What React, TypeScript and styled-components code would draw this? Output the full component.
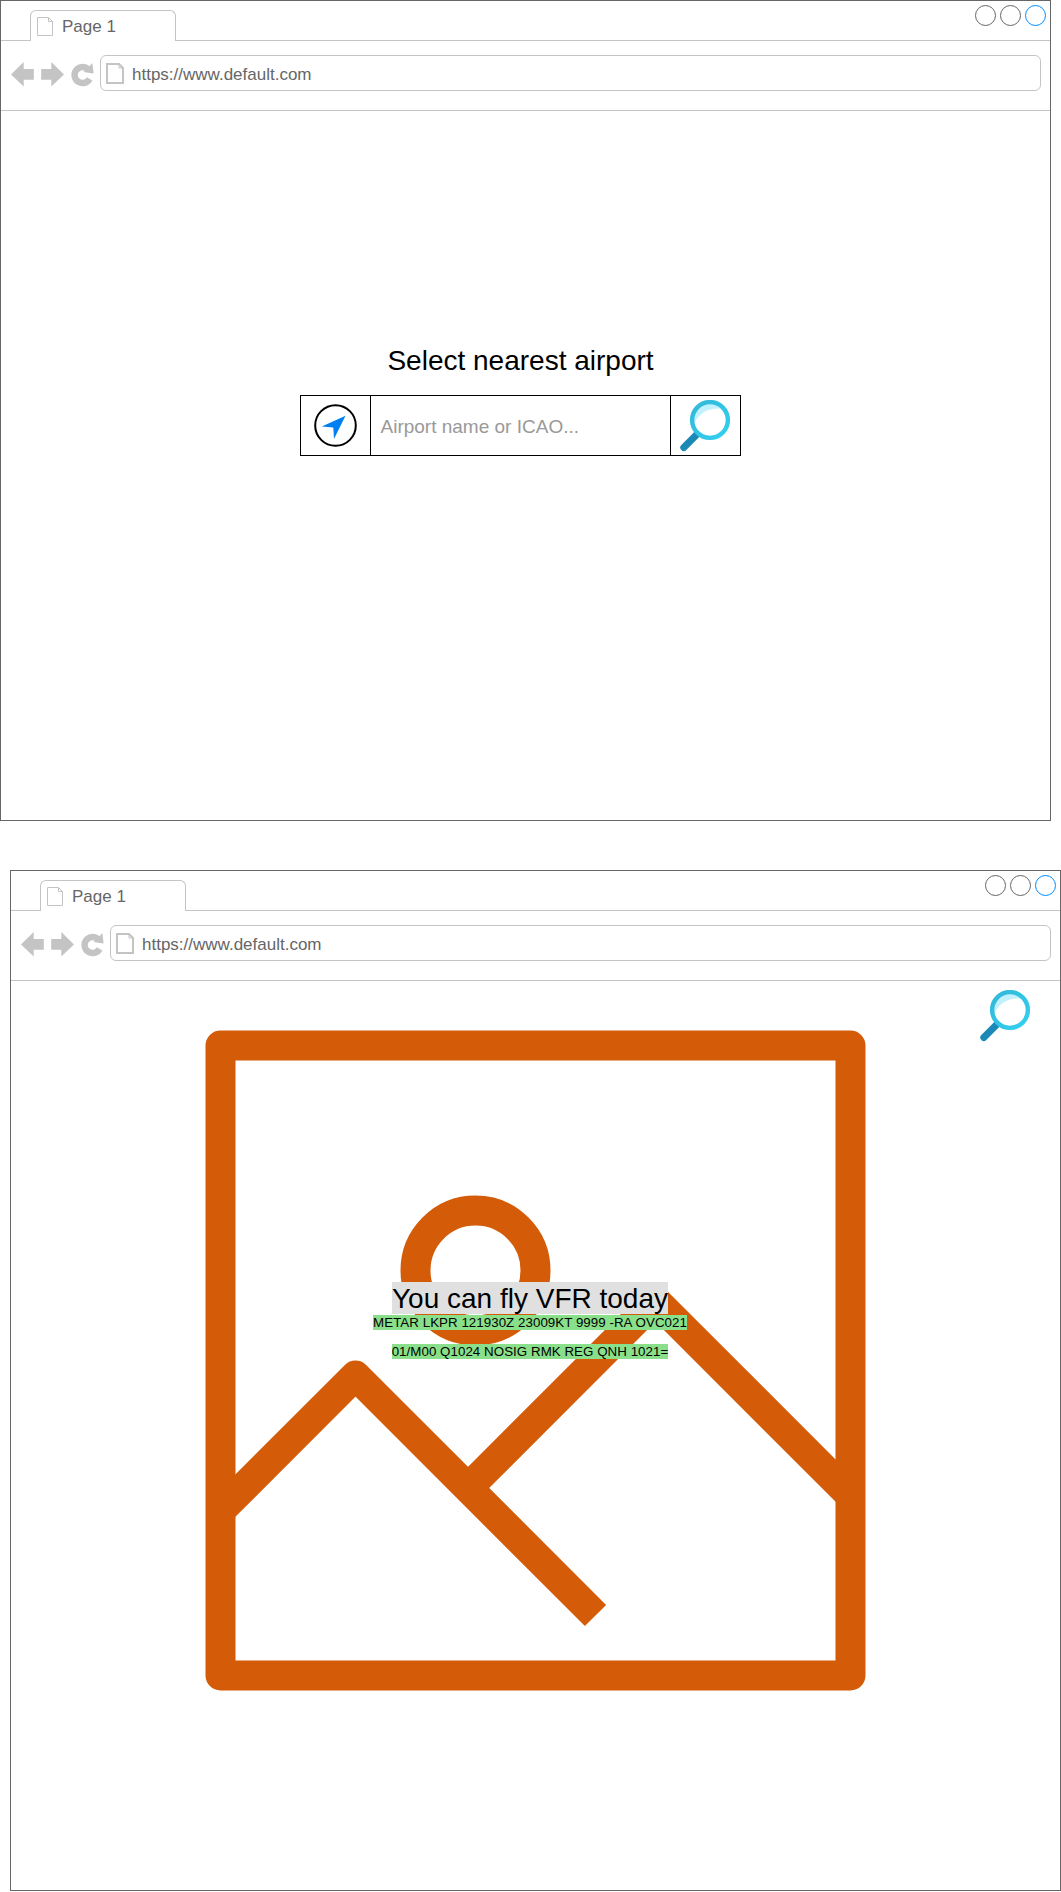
import React from "react";
import styled, { createGlobalStyle } from "styled-components";

const GlobalStyle = createGlobalStyle`
  * { box-sizing: border-box; }
  body {
    margin: 0;
    background: #fff;
    font-family: "Liberation Sans", Arial, Helvetica, sans-serif;
  }
  svg { display: block; flex: none; }
`;

const Board = styled.main`
  display: flex;
  flex-direction: column;
  gap: 49px;
  width: 1061px;
  height: 1892px;
`;

const Window = styled.section<{ $height: number; $inset?: number }>`
  display: flex;
  flex: none;
  flex-direction: column;
  width: 1051px;
  height: ${(p) => p.$height}px;
  margin-left: ${(p) => p.$inset ?? 0}px;
  border: 1px solid #666;
  background: #fff;
`;

const TabStrip = styled.header`
  display: flex;
  align-items: stretch;
  height: 40px;
`;

const StripLine = styled.div<{ $width?: number }>`
  flex: ${(p) => (p.$width ? `0 0 ${p.$width}px` : "1")};
  border-bottom: 1px solid #c4c4c4;
`;

const Tab = styled.div`
  display: flex;
  align-items: center;
  gap: 9px;
  width: 146px;
  margin-top: 9px;
  padding: 1px 0 0 6px;
  border: 1px solid #c4c4c4;
  border-bottom: 0;
  border-radius: 6px 6px 0 0;
  color: #666;
  font-size: 17px;
  line-height: 20px;
`;

const Controls = styled(StripLine)`
  display: flex;
  justify-content: flex-end;
  gap: 4px;
  padding: 4px 4px 0 0;
`;

const Control = styled.span<{ $color: string }>`
  width: 21px;
  height: 21px;
  border: 1px solid ${(p) => p.$color};
  border-radius: 50%;
`;

const Toolbar = styled.nav`
  display: flex;
  align-items: flex-start;
  height: 70px;
  padding: 14px 9px 0 9px;
  border-bottom: 1px solid #c4c4c4;
`;

const Address = styled.div`
  display: flex;
  flex: 1;
  align-items: center;
  gap: 8px;
  height: 36px;
  padding-left: 5px;
  border: 1px solid #c4c4c4;
  border-radius: 6px;
  color: #666;
  font-size: 17px;
  line-height: 20px;
`;

const Url = styled.span`
  padding-top: 3px;
`;

const SearchPage = styled.div`
  display: flex;
  flex-direction: column;
  align-items: center;
  padding: 234px 10px 0 0;
`;

const Heading = styled.h1`
  margin: 0 0 18px;
  font-size: 28px;
  font-weight: 400;
  line-height: 32px;
`;

const SearchRow = styled.div`
  display: flex;
  width: 441px;
  height: 61px;
  margin-right: 1px;
  border: 1px solid #000;
`;

const SearchCell = styled.button<{ $side: "left" | "right" }>`
  display: flex;
  align-items: center;
  justify-content: center;
  width: 70px;
  padding: 0;
  border: 0 solid #000;
  border-${(p) => (p.$side === "left" ? "right" : "left")}-width: 1px;
  background: none;
`;

const Field = styled.div`
  flex: 1;
  padding: 20px 0 0 10px;
  color: #999;
  font-size: 19px;
  line-height: 21px;
`;

const ResultPage = styled.div`
  display: grid;
  grid-template-columns: 1fr 661px 1fr;
`;

const Picture = styled.div`
  display: grid;
  grid-column: 2;
  margin-top: 49px;
  > * { grid-area: 1 / 1; }
`;

const Caption = styled.div`
  display: flex;
  flex-direction: column;
  align-items: center;
  padding: 252px 11px 0 0;
  text-align: center;
`;

const Verdict = styled.div`
  height: 32px;
  background: #e0e0e0;
  font-size: 28px;
  line-height: 34px;
  white-space: nowrap;
`;

const Metar = styled.div`
  display: flex;
  flex-direction: column;
  align-items: center;
  gap: 14px;
  margin-top: 1px;
  font-size: 13.33px;
  letter-spacing: 0.04px;
  line-height: 15px;
  white-space: nowrap;
`;

const Marked = styled.span`
  background: #8ae08a;
`;

const SearchAgain = styled.div`
  justify-self: end;
  padding: 9px 29px 0 0;
`;

function PageIcon({ width, height, stroke }: { width: number; height: number; stroke: number }) {
  const h = stroke / 2;
  const r = width - h;
  return (
    <svg width={width} height={height} fill="none" stroke="#c4c4c4" strokeWidth={stroke}>
      <path d={`M${h} ${h}H${r - 4}L${r} ${h + 4}V${height - h}H${h}Z`} />
      <path d={`M${r - 4} ${h}V${h + 4}H${r}`} strokeWidth="1" />
    </svg>
  );
}

function NavIcons() {
  return (
    <svg width="90" height="36" fill="#c4c4c4">
      <path d="M1 19.5L13.7 7V14H23.8V24.8H13.7V31.5Z" />
      <path d="M54 19.5L41.3 7V14H31.2V24.8H41.3V31.5Z" />
      <path d="M79.6 23.9A8 8 0 1 1 77.6 13.8" fill="none" stroke="#c4c4c4" strokeWidth="6.4" />
      <path d="M82.4 8L83.6 18.4L73.6 17Z" />
    </svg>
  );
}

function Magnifier() {
  return (
    <svg width="51" height="52" viewBox="0 0 51 52">
      <defs>
        <linearGradient id="ring" x1="0" y1="0" x2="1" y2="1">
          <stop offset="0" stopColor="#32b8d8" />
          <stop offset="1" stopColor="#32d0f0" />
        </linearGradient>
      </defs>
      <path d="M3.8 47.5L18 33.3" stroke="#1b88b6" strokeWidth="7" strokeLinecap="round" />
      <circle cx="30" cy="20" r="17.9" fill="#fff" />
      <path d="M14 23.5A16 16 0 0 1 41 8.5Q22 7.5 14 23.5Z" fill="#c3f0fd" />
      <circle cx="30" cy="20" r="17.9" fill="none" stroke="url(#ring)" strokeWidth="4.4" />
    </svg>
  );
}

function LocateIcon() {
  return (
    <svg width="43" height="43">
      <circle cx="21.5" cy="21.5" r="20.3" fill="none" stroke="#000" strokeWidth="2" />
      <path d="M31.5 11.8L7.8 22.4L19.3 23.6L20 35Z" fill="#0080f0" />
    </svg>
  );
}

function Landscape() {
  return (
    <svg width="661" height="661" fill="none" stroke="#d45b07" strokeWidth="30" strokeLinejoin="round">
      <rect x="15.5" y="15.5" width="630" height="630" />
      <circle cx="270.5" cy="240.5" r="60" />
      <path d="M15.5 480.5L150.5 345.5L390.5 585.5" />
      <path d="M263 458L450.5 270.5L645.5 465.5" />
    </svg>
  );
}

function BrowserWindow({ height, inset, children }: { height: number; inset?: number; children: React.ReactNode }) {
  return (
    <Window $height={height} $inset={inset}>
      <TabStrip>
        <StripLine $width={29} />
        <Tab>
          <PageIcon width={16} height={19} stroke={1} />
          Page 1
        </Tab>
        <Controls>
          <Control $color="#666" />
          <Control $color="#666" />
          <Control $color="#008cff" />
        </Controls>
      </TabStrip>
      <Toolbar>
        <NavIcons />
        <Address>
          <PageIcon width={18} height={21} stroke={2} />
          <Url>https://www.default.com</Url>
        </Address>
      </Toolbar>
      {children}
    </Window>
  );
}

export default function App() {
  return (
    <>
      <GlobalStyle />
      <Board>
        <BrowserWindow height={821}>
          <SearchPage>
            <Heading>Select nearest airport</Heading>
            <SearchRow>
              <SearchCell $side="left" aria-label="Use my location">
                <LocateIcon />
              </SearchCell>
              <Field>Airport name or ICAO...</Field>
              <SearchCell $side="right" aria-label="Search">
                <Magnifier />
              </SearchCell>
            </SearchRow>
          </SearchPage>
        </BrowserWindow>
        <BrowserWindow height={1021} inset={10}>
          <ResultPage>
            <Picture>
              <Landscape />
              <Caption>
                <Verdict>You can fly VFR today</Verdict>
                <Metar>
                  <Marked>METAR LKPR 121930Z 23009KT 9999 -RA OVC021</Marked>
                  <Marked>01/M00 Q1024 NOSIG RMK REG QNH 1021=</Marked>
                </Metar>
              </Caption>
            </Picture>
            <SearchAgain>
              <Magnifier />
            </SearchAgain>
          </ResultPage>
        </BrowserWindow>
      </Board>
    </>
  );
}
